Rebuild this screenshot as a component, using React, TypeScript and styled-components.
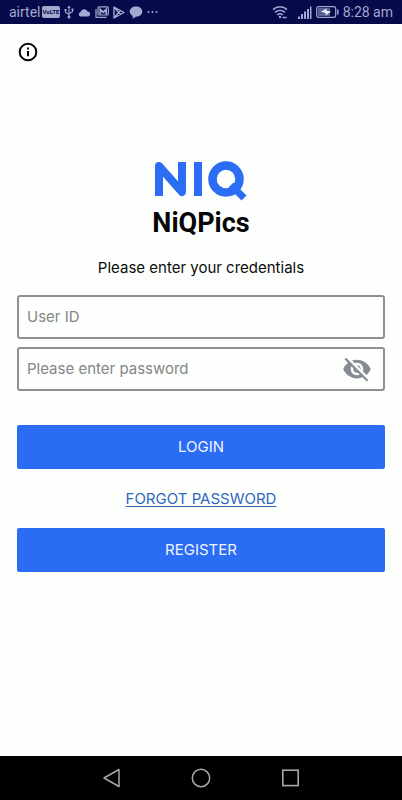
import React from "react";
import styled, { createGlobalStyle } from "styled-components";
import { MdVisibilityOff } from "react-icons/md";

const GlobalStyle = createGlobalStyle`
  *, *::before, *::after { box-sizing: border-box; }
  html, body, #root { height: 100%; }
  body {
    margin: 0;
    background: #fdfffd;
    color: #0c0c0c;
    font-family: Inter, "Open Sans", sans-serif;
  }
`;

const Screen = styled.div`
  display: flex;
  flex-direction: column;
  min-height: 100%;
`;

const StatusBar = styled.header`
  display: flex;
  align-items: center;
  justify-content: space-between;
  height: 24px;
  padding: 0 9px;
  background: #06094a;
  color: #a3a8cf;
  font: 14px/24px Roboto, sans-serif;
`;

const StatusGroup = styled.div<{ $gap: number }>`
  display: flex;
  align-items: center;
  gap: ${({ $gap }) => $gap}px;
`;

const VolteBadge = styled.span`
  padding: 0 1px;
  border-radius: 2px;
  background: #a3a8cf;
  color: #06094a;
  font: 700 6px/12px Roboto, sans-serif;
`;

const Carrier = styled.span`
  display: flex;
  align-items: center;
  gap: 1px;
`;

const Toolbar = styled.div`
  display: flex;
  align-items: center;
  height: 56px;
  padding: 0 18px;
`;

const IconButton = styled.button`
  display: flex;
  padding: 0;
  border: 0;
  background: none;
  color: inherit;
  cursor: pointer;
`;

const Content = styled.main`
  display: flex;
  flex: 1;
  flex-direction: column;
  padding: 81px 17px 40px;
`;

const Brand = styled.div`
  display: flex;
  flex-direction: column;
  align-items: center;
`;

const Title = styled.h1`
  margin: 4px 0 0;
  color: #050505;
  font: 700 27px/36px Roboto, sans-serif;
`;

const Prompt = styled.p`
  margin: 17px 0;
  font-size: 15px;
  line-height: 20px;
  text-align: center;
`;

const Form = styled.form`
  display: flex;
  flex-direction: column;
`;

const Fields = styled.div`
  display: flex;
  flex-direction: column;
  gap: 8px;
  margin-bottom: 34px;
`;

const Field = styled.label`
  display: flex;
  align-items: center;
  height: 44px;
  padding: 0 11px 0 8px;
  border: 2px solid #8f908f;
  border-radius: 3px;
`;

const Input = styled.input`
  flex: 1;
  min-width: 0;
  padding: 0;
  border: 0;
  outline: 0;
  background: none;
  color: #0c0c0c;
  font: 15px/20px Inter, sans-serif;

  &::placeholder {
    color: #858585;
    opacity: 1;
  }
`;

const PrimaryButton = styled.button`
  height: 44px;
  padding: 0;
  border: 0;
  border-radius: 2px;
  background: #2b6cf4;
  color: #f0f5ff;
  font: 15px/20px Inter, sans-serif;
  cursor: pointer;
`;

const ForgotLink = styled.a`
  align-self: center;
  margin: 20px 0 19px;
  color: #3166bd;
  font-size: 15px;
  line-height: 20px;
  text-underline-offset: 2px;
`;

const NavBar = styled.nav`
  display: flex;
  align-items: center;
  justify-content: center;
  gap: 70px;
  height: 44px;
  background: #000;
  color: #a8a8a8;
`;

const UsbIcon = () => (
  <svg width="10" height="14" viewBox="0 0 10 14" fill="none" stroke="currentColor" strokeWidth="1.1">
    <path d="M5 2v9M1.5 5v2.2L5 9.5M8.5 4.5v2.2L5 8.8" />
    <path d="M3.3 3 5 .4 6.7 3zM.5 4h2v2h-2zM7.5 3.5h2v2h-2z" fill="currentColor" stroke="none" />
    <circle cx="5" cy="12" r="1.5" fill="currentColor" stroke="none" />
  </svg>
);

const CloudIcon = () => (
  <svg width="13" height="9" viewBox="0 0 13 9" fill="currentColor">
    <path d="M2.500 8.500a2.300 2.300 0 0 1 .1-4.500A3.700 3.700 0 0 1 9.500 3.400 2.600 2.600 0 0 1 10.300 8.500z" />
  </svg>
);

const GalleryIcon = () => (
  <svg width="14" height="12" viewBox="0 0 14 12" fill="none" stroke="currentColor" strokeWidth="1.2">
    <path d="M1 3v8.300h10.500" />
    <rect x="3" y=".8" width="10.3" height="8.2" rx="1" />
    <path d="M5.300 8.500V3.500l2.900 2.700 2.900-2.700v5" strokeWidth="1.8" />
  </svg>
);

const PlayIcon = () => (
  <svg width="12" height="13" viewBox="0 0 12 13" fill="none" stroke="currentColor" strokeWidth="1.4" strokeLinejoin="round">
    <path d="M1 1v11l10-5.500zM1 1l6.500 7.500M1 12l6.500-7.500" />
  </svg>
);

const ChatIcon = () => (
  <svg width="14" height="13" viewBox="0 0 14 13" fill="currentColor">
    <path d="M7 .5c3.600 0 6.300 2.100 6.300 5.100S10.600 10.700 7 10.700l-3.400 2 .2-2.700C1.900 9.100.7 7.500.7 5.600.7 2.600 3.400.5 7 .5z" />
  </svg>
);

const MoreIcon = () => (
  <svg width="11" height="4" viewBox="0 0 11 4" fill="currentColor">
    <circle cx="1.5" cy="2" r="1" />
    <circle cx="5.5" cy="2" r="1" />
    <circle cx="9.5" cy="2" r="1" />
  </svg>
);

const WifiIcon = () => (
  <svg width="16" height="14" viewBox="0 0 16 14" fill="none" stroke="currentColor" strokeWidth="1.5">
    <path d="M1 4.600c4-3.800 10-3.800 14 0M3 7.400c3-2.700 7-2.700 10 0M5.200 10c1.700-1.500 3.900-1.500 5.600 0" />
    <circle cx="8" cy="12" r="1.2" fill="currentColor" stroke="none" />
    <path d="M10.500 12.500h4" />
  </svg>
);

const SignalIcon = () => (
  <svg width="14" height="13" viewBox="0 0 14 13" fill="currentColor">
    <path d="M0 10.500h2V13H0zM3 8h2v5H3zM6 5.500h2V13H6zM9 3h2v10H9zM12 .5h1.500V13H12z" />
  </svg>
);

const BatteryIcon = () => (
  <svg width="23" height="12" viewBox="0 0 23 12" fill="none">
    <rect x=".7" y=".7" width="19" height="10.6" rx="2" stroke="currentColor" strokeWidth="1.2" />
    <rect x="2" y="2" width="12" height="8" fill="currentColor" opacity=".55" />
    <path d="M5 5.800 10.500 2.500v2.300l4.500.7-5.300 4v-2.600z" fill="#eef0ff" />
    <path d="M21.800 3.500v5" stroke="currentColor" strokeWidth="1.5" />
  </svg>
);

const InfoIcon = () => (
  <svg width="20" height="20" viewBox="0 0 20 20" fill="none" stroke="#080808" strokeWidth="2">
    <circle cx="10" cy="10" r="8.3" />
    <path d="M10 9v5.300M10 5.600v2" />
  </svg>
);

const NiqLogo = () => (
  <svg width="94" height="40" viewBox="0 0 94 40" fill="none" stroke="#2b6df4" strokeWidth="8" role="img" aria-label="NIQ">
    <polyline points="5,35 5,5 28,31 28,1" strokeLinejoin="round" />
    <line x1="44" y1="1" x2="44" y2="35" />
    <circle cx="72" cy="18" r="13.5" strokeWidth="8.5" />
    <line x1="77" y1="24" x2="90" y2="37" strokeWidth="7" />
  </svg>
);

const BackIcon = () => (
  <svg width="20" height="20" viewBox="0 0 20 20" fill="none" stroke="currentColor" strokeWidth="1.5" strokeLinejoin="round">
    <path d="M18 1.500v17L3 10z" />
  </svg>
);

const HomeIcon = () => (
  <svg width="20" height="20" viewBox="0 0 20 20" fill="none" stroke="currentColor" strokeWidth="1.5">
    <circle cx="10" cy="10" r="8.7" />
  </svg>
);

const RecentsIcon = () => (
  <svg width="20" height="20" viewBox="0 0 20 20" fill="none" stroke="currentColor" strokeWidth="1.6">
    <rect x="1.8" y="2.2" width="15.4" height="15.4" />
  </svg>
);

export default function App() {
  return (
    <Screen>
      <GlobalStyle />
      <StatusBar>
        <StatusGroup $gap={4}>
          <Carrier>
            airtel <VolteBadge>VoLTE</VolteBadge>
          </Carrier>
          <UsbIcon />
          <CloudIcon />
          <GalleryIcon />
          <PlayIcon />
          <ChatIcon />
          <MoreIcon />
        </StatusGroup>
        <StatusGroup $gap={4}>
          <StatusGroup $gap={10}>
            <WifiIcon />
            <SignalIcon />
          </StatusGroup>
          <BatteryIcon />
          <time>8:28 am</time>
        </StatusGroup>
      </StatusBar>
      <Toolbar>
        <IconButton type="button" aria-label="Information">
          <InfoIcon />
        </IconButton>
      </Toolbar>
      <Content>
        <Brand>
          <NiqLogo />
          <Title>NiQPics</Title>
        </Brand>
        <Prompt>Please enter your credentials</Prompt>
        <Form onSubmit={(event) => event.preventDefault()}>
          <Fields>
            <Field>
              <Input type="text" placeholder="User ID" aria-label="User ID" autoComplete="username" />
            </Field>
            <Field>
              <Input
                type="password"
                placeholder="Please enter password"
                aria-label="Password"
                autoComplete="current-password"
              />
              <IconButton type="button" aria-label="Show password">
                <MdVisibilityOff size={30} color="#878b94" />
              </IconButton>
            </Field>
          </Fields>
          <PrimaryButton type="submit">LOGIN</PrimaryButton>
          <ForgotLink href="#forgot-password">FORGOT PASSWORD</ForgotLink>
          <PrimaryButton type="button">REGISTER</PrimaryButton>
        </Form>
      </Content>
      <NavBar aria-label="System navigation">
        <IconButton type="button" aria-label="Back">
          <BackIcon />
        </IconButton>
        <IconButton type="button" aria-label="Home">
          <HomeIcon />
        </IconButton>
        <IconButton type="button" aria-label="Recent apps">
          <RecentsIcon />
        </IconButton>
      </NavBar>
    </Screen>
  );
}
